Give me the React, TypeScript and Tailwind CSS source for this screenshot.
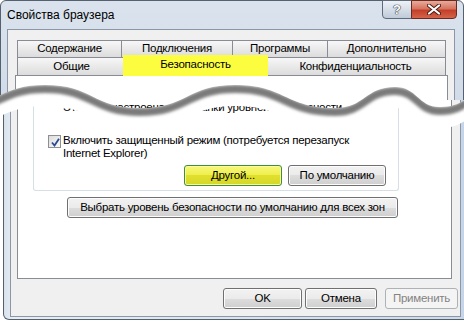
const pts: [number, number][] = [
  [-50, 108], [45, 85], [140, 108], [235, 85], [335, 108], [395, 87], [440, 107], [500, 86],
];

function wavePath(dy: number) {
  let d = `M ${pts[0][0]} ${pts[0][1] + dy}`;
  for (let i = 1; i < pts.length; i++) {
    const [x0, y0] = pts[i - 1];
    const [x1, y1] = pts[i];
    const m = (x1 - x0) / 2;
    d += ` C ${x0 + m} ${y0 + dy} ${x1 - m} ${y1 + dy} ${x1} ${y1 + dy}`;
  }
  return d;
}

const edge = wavePath(0);
const lower = wavePath(21);
const shade = wavePath(4);

const txt = "text-[11.5px] tracking-[-0.25px]";

const btn = `flex items-center justify-center h-[21px] rounded-[3px] border border-[#707070] bg-[linear-gradient(to_bottom,#f2f2f2_0%,#ebebeb_50%,#dddddd_50%,#cfcfcf_100%)] shadow-[inset_0_0_0_1px_#fcfcfc] ${txt} text-black`;

const tab = `flex items-center justify-center border border-b-0 border-[#898c95] bg-gradient-to-b from-[#f7f7f7] to-[#dcdcdc] ${txt} text-black`;

function Tear() {
  return (
    <svg className="absolute inset-0 pointer-events-none" width={464} height={322}>
      <defs>
        <clipPath id="below">
          <path d={edge + " L 500 400 L -50 400 Z"} />
        </clipPath>
        <clipPath id="aboveLower">
          <path d={lower + " L 500 -10 L -50 -10 Z"} />
        </clipPath>
        <filter id="soft" x="-10%" y="-100%" width="120%" height="300%">
          <feGaussianBlur stdDeviation="1.8" />
        </filter>
      </defs>
      <g clipPath="url(#below)">
        <path d={edge + " L 500 400 L -50 400 Z"} fill="#ffffff" clipPath="url(#aboveLower)" />
        <path d={shade} stroke="#7a7a7a" strokeWidth={8} fill="none" filter="url(#soft)" />
      </g>
    </svg>
  );
}

function CheckBox() {
  return (
    <div className="w-[13px] h-[13px] shrink-0 border border-[#8e8f8f] bg-gradient-to-br from-[#dcdcdc] to-[#fafafa] p-[1px]">
      <svg width="11" height="11" viewBox="0 0 11 11">
        <path d="M2 5.5 L4.5 8.5 L9 1.8" stroke="#2a4a8f" strokeWidth="1.8" fill="none" />
      </svg>
    </div>
  );
}

export default function App() {
  return (
    <div className="relative w-[464px] h-[322px] overflow-hidden bg-white font-['Liberation_Sans',Arial,sans-serif] text-black">
      {/* upper piece */}
      <div className="h-[100px] overflow-hidden">
        <div className="w-[464px] h-[140px] rounded-t-[6px] border border-[#56616f] bg-gradient-to-b from-[#dae3ed] to-[#cdd9e6] pl-[6px] pr-[8px]">
          <div className="flex h-[28px]">
            <span className="pt-[7px] text-[12px] leading-[15px]">Свойства браузера</span>
            <div className="ml-auto -mt-px -mr-[2px] flex h-[19px]">
              <div className="flex w-[30px] items-center justify-center rounded-bl-[4px] border border-[#5f6b7b] bg-gradient-to-b from-[#eef2f7] to-[#bfcbd9] text-[13px] font-bold text-white [text-shadow:0_0_1px_#2c3644,0_0_1px_#2c3644,0_0_1px_#2c3644]">
                ?
              </div>
              <div className="-ml-px flex w-[46px] items-center justify-center rounded-br-[4px] border border-[#6b2a20] bg-[linear-gradient(to_bottom,#e8ab9c_0%,#d7745f_45%,#c2402a_55%,#d5634a_100%)]">
                <svg width="14" height="11" viewBox="0 0 14 11">
                  <path d="M2 1.5 L12 9.5 M12 1.5 L2 9.5" stroke="#4a1a12" strokeWidth="4" strokeLinecap="round" />
                  <path d="M2 1.5 L12 9.5 M12 1.5 L2 9.5" stroke="#ffffff" strokeWidth="2.2" strokeLinecap="round" />
                </svg>
              </div>
            </div>
          </div>
          <div className="h-[120px] border border-[#8b97a6] bg-[#f0f0f0] pt-[10px] pl-[7px]">
            <div className="flex h-[17px] pl-[2px]">
              <div className={`${tab} w-[105px]`}>Содержание</div>
              <div className={`${tab} -ml-px w-[112px]`}>Подключения</div>
              <div className={`${tab} -ml-px w-[96px]`}>Программы</div>
              <div className={`${tab} -ml-px w-[119px]`}>Дополнительно</div>
            </div>
            <div className="flex h-[18px] items-start pl-[2px]">
              <div className={`${tab} h-[18px] w-[109px]`}>Общие</div>
              <div className={`relative z-10 -mt-[2px] -mb-px -ml-[3px] flex h-[21px] w-[145px] items-center justify-center bg-[#fdfd40] pb-[2px] ${txt}`}>
                Безопасность
              </div>
              <div className={`${tab} h-[18px] -ml-[3px] w-[181px]`}>Конфиденциальность</div>
            </div>
            <div className="h-[60px] w-[433px] border border-[#898c95] bg-white" />
          </div>
        </div>
      </div>

      {/* lower piece */}
      <div className="h-[222px] pl-[3px]">
        <div className="h-[220px] w-[470px] rounded-b-[6px] border border-t-0 border-[#55606d] bg-[linear-gradient(to_right,#d9e2ec_0%,#e6edf4_2%,#cfdbe8_97%,#b3cbe5_100%)] pl-[6px]">
          <div className="h-[217px] w-[451px] border border-t-0 border-[#8b97a6] bg-[#f0f0f0] pl-[6px]">
            <div className="h-[179px] w-[435px] border border-t-0 border-[#898c95] bg-white">
              <div className="ml-[15px] h-[91px] w-[366px] rounded-b-[3px] border border-t-0 border-[#d5dfe5] pt-[1px]">
                <div className={`pl-[29px] leading-[13px] whitespace-nowrap ${txt}`}>
                  Эта зона настроена вне планки уровней безопасности
                </div>
                <div className="mt-[20px] flex gap-[2px] pl-[14px]">
                  <div className="pt-[1px]">
                    <CheckBox />
                  </div>
                  <div className={`leading-[13px] ${txt}`}>
                    Включить защищенный режим (потребуется перезапуск
                    <br />
                    Internet Explorer)
                  </div>
                </div>
                <div className="mt-[5px] flex justify-end gap-[6px] pr-[12px]">
                  <div className={`flex h-[21px] w-[98px] items-center justify-center rounded-[3px] border border-[#3d8f3a] bg-[linear-gradient(to_bottom,#f8f87a_0%,#eeee4a_50%,#e0e02c_50%,#d6d62a_100%)] shadow-[inset_0_0_0_1px_#fbfb9a] ${txt}`}>
                    Другой...
                  </div>
                  <div className={`${btn} w-[98px]`}>По умолчанию</div>
                </div>
              </div>
              <div className={`${btn} ml-[49px] mt-[6px] w-[331px] whitespace-nowrap`}>
                Выбрать уровень безопасности по умолчанию для всех зон
              </div>
            </div>
            <div className="mt-[9px] flex pl-[206px]">
              <div className={`${btn} w-[79px]`}>OK</div>
              <div className={`${btn} ml-[3px] w-[72px]`}>Отмена</div>
              <div className={`ml-[8px] flex h-[21px] w-[73px] items-center justify-center rounded-[3px] border border-[#adb2b5] bg-[#f4f4f4] text-[#838383] ${txt}`}>
                Применить
              </div>
            </div>
          </div>
        </div>
      </div>

      <Tear />
    </div>
  );
}
